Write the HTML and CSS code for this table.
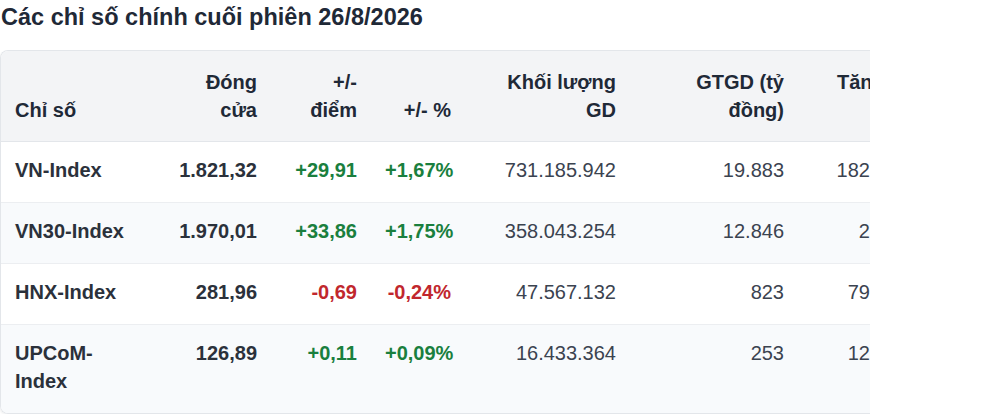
FILE: index.html
```html
<!DOCTYPE html>
<html lang="vi">
<head>
<meta charset="utf-8">
<title>Các chỉ số chính cuối phiên 26/8/2026</title>
<link rel="stylesheet" href="styles.css">
</head>
<body>
<h2 class="title">Các chỉ số chính cuối phiên 26/8/2026</h2>
<div class="table-wrap">
  <table class="idx-table">
    <colgroup>
      <col class="c-name"><col class="c-close"><col class="c-pt"><col class="c-pct"><col class="c-vol"><col class="c-val"><col class="c-adv">
    </colgroup>
    <thead>
      <tr>
        <th class="left">Chỉ số</th>
        <th>Đóng cửa</th>
        <th>+/- điểm</th>
        <th>+/- %</th>
        <th>Khối lượng GD</th>
        <th>GTGD (tỷ đồng)</th>
        <th class="adv-head">Tăng/giảm</th>
      </tr>
    </thead>
    <tbody>
      <tr>
        <td class="name">VN-Index</td>
        <td class="strong">1.821,32</td>
        <td class="strong up">+29,91</td>
        <td class="strong up">+1,67%</td>
        <td>731.185.942</td>
        <td>19.883</td>
        <td>182 / 136</td>
      </tr>
      <tr class="alt">
        <td class="name">VN30-Index</td>
        <td class="strong">1.970,01</td>
        <td class="strong up">+33,86</td>
        <td class="strong up">+1,75%</td>
        <td>358.043.254</td>
        <td>12.846</td>
        <td>2 / 123</td>
      </tr>
      <tr>
        <td class="name">HNX-Index</td>
        <td class="strong">281,96</td>
        <td class="strong down">-0,69</td>
        <td class="strong down">-0,24%</td>
        <td>47.567.132</td>
        <td>823</td>
        <td>79 / 186</td>
      </tr>
      <tr class="alt">
        <td class="name">UPCoM-Index</td>
        <td class="strong">126,89</td>
        <td class="strong up">+0,11</td>
        <td class="strong up">+0,09%</td>
        <td>16.433.364</td>
        <td>253</td>
        <td>125 / 93</td>
      </tr>
    </tbody>
  </table>
</div>
</body>
</html>
```

FILE: styles.css
```css
* { box-sizing: border-box; }

body {
  margin: 0;
  background: #ffffff;
  font-family: "Liberation Sans", Arial, sans-serif;
  color: #1f2937;
}

.title {
  margin: 4px 0 20px 1px;
  font-size: 23.5px;
  line-height: 26px;
  font-weight: 700;
  color: #1f2937;
}

.table-wrap {
  width: 870px;
  border: 1px solid #e3e6ea;
  border-right: none;
  border-radius: 8px 0 0 8px;
  overflow: hidden;
  box-shadow: -1px 1px 2px rgba(0, 0, 0, 0.05);
}

.idx-table {
  width: 933px;
  table-layout: fixed;
  border-collapse: collapse;
  font-size: 20px;
  line-height: 28px;
}

.c-name { width: 155px; }
.c-close { width: 115px; }
.c-pt { width: 100px; }
.c-pct { width: 94px; }
.c-vol { width: 165px; }
.c-val { width: 168px; }
.c-adv { width: 136px; }

.idx-table th {
  background: #f3f4f6;
  padding: 17px 14px;
  text-align: right;
  vertical-align: bottom;
  font-weight: 700;
  color: #1f2937;
  border-bottom: 1px solid #e3e6ea;
}

.idx-table th.left { text-align: left; }

.idx-table th.adv-head {
  text-align: left;
  vertical-align: top;
  white-space: nowrap;
  padding-left: 39px;
}

.idx-table td {
  padding: 14px 14px 18px;
  text-align: right;
  vertical-align: top;
  color: #3b4350;
  border-bottom: 1px solid #eceef1;
}

.idx-table tbody tr:last-child td { border-bottom: none; }

.idx-table tr.alt td { background: #f8fafc; }

.idx-table td.name {
  text-align: left;
  font-weight: 700;
  color: #2b313b;
}

.idx-table td.strong {
  font-weight: 700;
  color: #2b313b;
}

.idx-table td.up { color: #1a7f3e; }
.idx-table td.down { color: #c1272d; }
```
